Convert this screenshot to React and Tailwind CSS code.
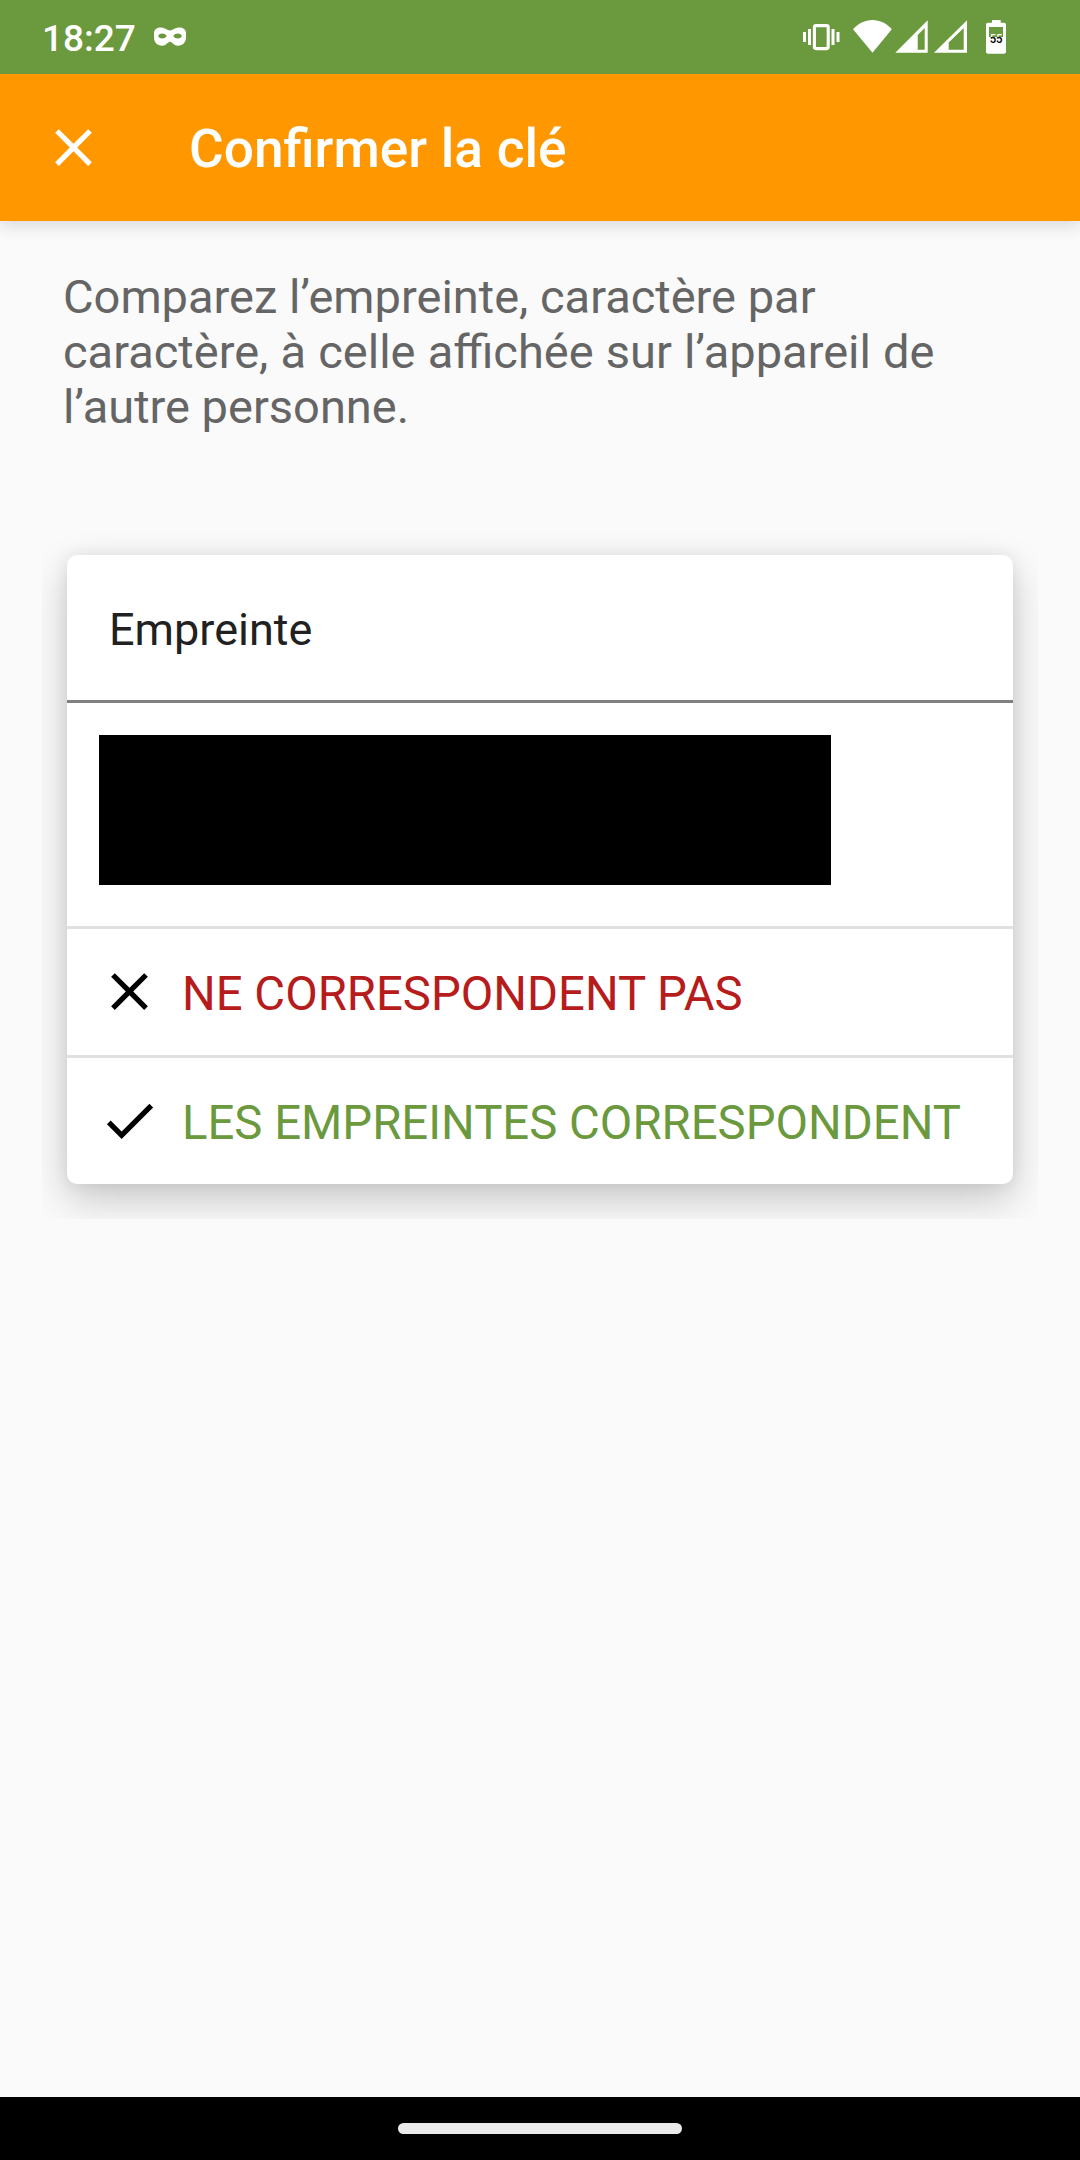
import React from 'react';

const MaskIcon = () => (
  <svg width="34" height="20" viewBox="0 0 34 20" className="shrink-0">
    <path
      fill="#fff"
      fillRule="evenodd"
      d="M1 6C1 2.5 4 0.5 8 0.5C12.5 0.5 14 3.5 17 3.5S21.5 0.5 26 0.5C30 0.5 33 2.5 33 6V10C33 15.5 29.5 18.7 25 18.7C20.5 18.7 19.5 14.7 17 14.7S13.5 18.7 9 18.7C4.5 18.7 1 15.5 1 10ZM5 9C6 7.3 7.5 6.5 9.2 6.5S12.8 7.3 13.8 9C12.8 10.7 11 11.5 9.2 11.5S6 10.7 5 9ZM20.2 9C21.2 7.3 23 6.5 24.8 6.5S28 7.3 29 9C28 10.7 26.5 11.5 24.8 11.5S21.2 10.7 20.2 9Z"
    />
  </svg>
);

const StatusIcons = () => (
  <svg width="210" height="36" viewBox="0 0 210 36" className="shrink-0" fill="#fff">
    {/* vibrate */}
    <rect x="12.4" y="6.6" width="13.8" height="23" rx="1.5" fill="none" stroke="#fff" strokeWidth="3.1" />
    <rect x="1" y="13" width="3" height="10" />
    <rect x="6" y="10" width="3" height="16" />
    <rect x="29.5" y="10" width="3" height="16" />
    <rect x="34.5" y="13" width="3" height="10" />
    {/* wifi */}
    <path d="M51 10.3C56 4.5 63 1 70.5 1S85 4.5 89.8 10.3L70.5 33.7Z" />
    {/* signals */}
    <path fillRule="evenodd" d="M93.3 33.7L125.7 1.3V33.7ZM115.7 16V30.7H122.7V9Z" />
    <path fillRule="evenodd" d="M132 33.7L165 1.3V33.7ZM146.7 23.5V30.7H161.7V9Z" />
    {/* battery, the digits turn black over the filled part */}
    <linearGradient id="level" gradientUnits="userSpaceOnUse" x1="0" y1="8" x2="0" y2="28">
      <stop offset="0.5" stopColor="#fff" />
      <stop offset="0.5" stopColor="#000" />
    </linearGradient>
    <path fillRule="evenodd" d="M190 1H198.7V3.7H202C203.2 3.7 204 4.5 204 5.7V32.7C204 33.9 203.2 34.7 202 34.7H186C184.8 34.7 184 33.9 184 32.7V5.7C184 4.5 184.8 3.7 186 3.7H190ZM187 8V18H201V8Z" />
    <text x="187.7" y="24" fill="url(#level)" fontSize="13.5" fontWeight="500" textLength="12.8" lengthAdjust="spacingAndGlyphs" className="font-['Roboto']">55</text>
  </svg>
);

const CloseIcon = ({ className }) => (
  <svg width="63" height="63" viewBox="0 0 24 24" className={className} fill="currentColor">
    <path d="M19 6.41L17.59 5 12 10.59 6.41 5 5 6.41 10.59 12 5 17.59 6.41 19 12 13.41 17.59 19 19 17.59 13.41 12z" />
  </svg>
);

const CheckIcon = ({ className }) => (
  <svg width="63" height="63" viewBox="0 0 24 24" className={className} fill="currentColor">
    <path d="M9 16.17L4.83 12l-1.42 1.41L9 19 21 7l-1.41-1.41z" />
  </svg>
);

const ActionRow = ({ icon, label, className }) => (
  <button className="flex h-[129px] w-full items-center border-t-[3px] border-[#e0e0e0] pl-[31px] text-left">
    {icon}
    <span className={className}>{label}</span>
  </button>
);

const App = () => {
  return (
    <div className="flex h-[2160px] w-[1080px] flex-col overflow-hidden bg-[#fafafa] font-['Roboto',sans-serif]">
      {/* Status bar */}
      <div className="z-20 flex h-[74px] shrink-0 items-center bg-[#6b993d] pl-[42px] text-white">
        <span className="w-[111px] pt-[3px] text-[37px] leading-none font-medium whitespace-nowrap">18:27</span>
        <MaskIcon />
        <div className="mr-[68px] ml-auto">
          <StatusIcons />
        </div>
      </div>

      {/* Toolbar */}
      <header className="z-10 flex h-[147px] shrink-0 items-center bg-[#ff9800] pl-[42px] text-white shadow-[0_4px_16px_rgba(0,0,0,0.14)]">
        <CloseIcon />
        <h1 className="ml-[84px] pt-[5px] text-[53.2px] leading-none font-medium [word-spacing:0.5px]">
          Confirmer la clé
        </h1>
      </header>

      <main className="flex-1">
        <p className="pt-[48px] pl-[63px] text-[47px] leading-[55px] text-[#656565]">
          Comparez l’empreinte, caractère par
          <br />
          <span className="[word-spacing:0.5px]">caractère, à celle affichée sur l’appareil de</span>
          <br />
          l’autre personne.
        </p>

        {/* Card, the shadow is cut off at the container's edge */}
        <div className="mx-[42px] mt-[91px] overflow-hidden px-[25px] pt-[30px] pb-[35px]">
          <div className="h-[629px] overflow-hidden rounded-[10px] bg-white shadow-[0_16px_40px_rgba(0,0,0,0.2),0_0_16px_rgba(0,0,0,0.08)]">
            <h2 className="flex h-[148px] items-center border-b-[3px] border-[#808080] pt-[4px] pl-[42px] text-[45px] text-[#212121]">
              Empreinte
            </h2>
            <div className="h-[223px] pt-[32px] pl-[32px]">
              <div className="h-[150px] w-[732px] bg-black" />
            </div>
            <ActionRow
              icon={<CloseIcon className="mb-[2px] text-black" />}
              label="NE CORRESPONDENT PAS"
              className="ml-[21px] pt-[5px] text-[47.3px] text-[#b71c1c]"
            />
            <ActionRow
              icon={<CheckIcon className="mb-[2px] text-black" />}
              label="LES EMPREINTES CORRESPONDENT"
              className="ml-[21px] pt-[5px] text-[47.3px] text-[#6b993d]"
            />
          </div>
        </div>
      </main>

      {/* Navigation bar */}
      <div className="flex h-[63px] shrink-0 items-start justify-center bg-black pt-[26px]">
        <div className="h-[11px] w-[284px] rounded-full bg-[#ebebeb]" />
      </div>
    </div>
  );
};

export default App;
